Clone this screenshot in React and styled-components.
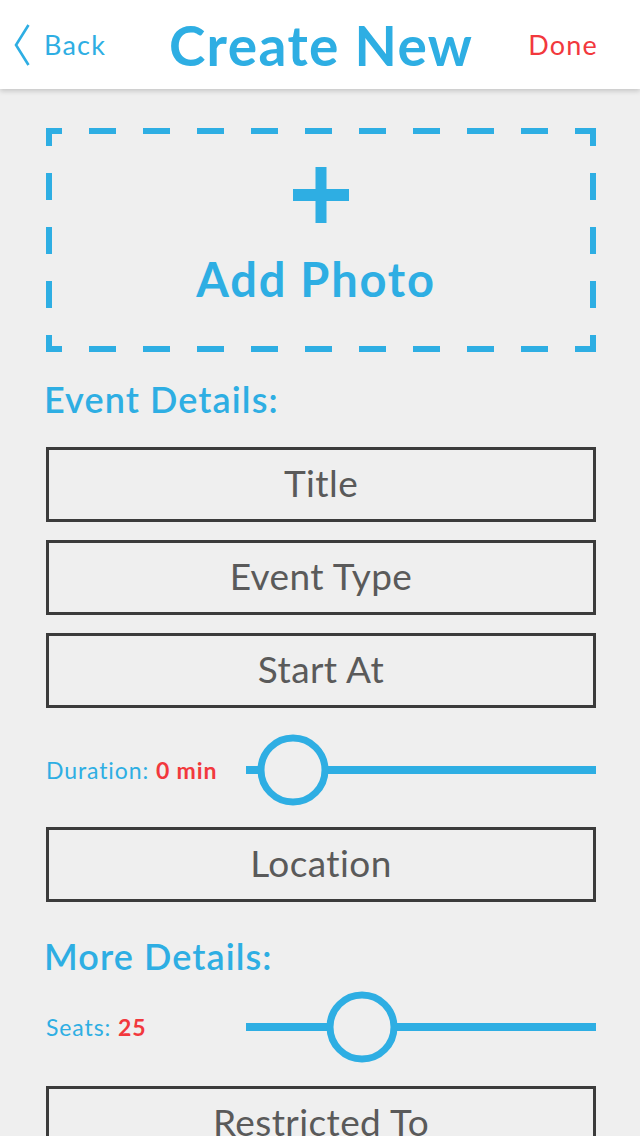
import React from 'react';
import styled, { createGlobalStyle } from 'styled-components';

const colors = {
  blue: '#2eaee3',
  red: '#f2383d',
  bg: '#efefef',
  border: '#3b3b3b',
  text: '#5a5a5a',
};

const GlobalStyle = createGlobalStyle`
  body {
    margin: 0;
    background: ${colors.bg};
    font-family: Lato, 'Open Sans', sans-serif;
  }
`;

const Page = styled.div`
  width: 640px;
  height: 1136px;
  overflow: hidden;
  background: ${colors.bg};
`;

const Header = styled.header`
  position: relative;
  z-index: 1;
  height: 89px;
  background: #fff;
  box-shadow: 0 2px 5px rgba(0, 0, 0, 0.18);
  display: flex;
  align-items: center;
  justify-content: space-between;
  padding: 0 42px 0 14px;
  box-sizing: border-box;
`;

const BackButton = styled.button`
  display: flex;
  align-items: center;
  gap: 14px;
  border: 0;
  background: none;
  padding: 0;
  color: ${colors.blue};
  font: 400 27px Lato, sans-serif;
  letter-spacing: 1.2px;
  cursor: pointer;
`;

const Title = styled.h1`
  margin: 0 0 0 8px;
  color: ${colors.blue};
  font: 700 55px Lato, sans-serif;
  letter-spacing: 1.4px;
`;

const DoneButton = styled.button`
  border: 0;
  background: none;
  padding: 0;
  color: ${colors.red};
  font: 400 27px Lato, sans-serif;
  letter-spacing: 1.2px;
  cursor: pointer;
`;

const Content = styled.main`
  padding: 39px 44px 0 46px;
`;

const dash = (dir) =>
  `linear-gradient(${dir}, ${colors.blue} 27px, transparent 27px)`;

const PhotoBox = styled.div`
  height: 224px;
  display: flex;
  flex-direction: column;
  align-items: center;
  color: ${colors.blue};
  background-image: ${dash('to right')}, ${dash('to right')},
    ${dash('to bottom')}, ${dash('to bottom')};
  background-size: 54px 6px, 54px 6px, 6px 54px, 6px 54px;
  background-repeat: repeat-x, repeat-x, repeat-y, repeat-y;
  background-position: -11px 0, -11px 100%, 0 -9px, 100% -9px;
`;

const Plus = styled.svg`
  margin-top: 39px;
  width: 56px;
  height: 56px;
`;

const PhotoLabel = styled.div`
  margin: 32px 10px 0 0;
  font: 700 47px Lato, sans-serif;
  letter-spacing: 1.8px;
  line-height: 48px;
`;

const SectionTitle = styled.h2`
  margin: ${(p) => p.$top}px 0 0 -2px;
  color: ${colors.blue};
  font: 600 36px Lato, sans-serif;
  letter-spacing: 1.1px;
  line-height: 44px;
`;

const Field = styled.div`
  height: 75px;
  margin-top: ${(p) => p.$top}px;
  padding-bottom: 5px;
  box-sizing: border-box;
  border: 3px solid ${colors.border};
  display: flex;
  align-items: center;
  justify-content: center;
  color: ${colors.text};
  font: 400 37px Lato, sans-serif;
  letter-spacing: 0.4px;
`;

const SliderRow = styled.div`
  display: flex;
  align-items: center;
  height: 71px;
  margin-top: ${(p) => p.$top}px;
`;

const SliderLabel = styled.div`
  width: 200px;
  color: ${colors.blue};
  font: 400 23px Lato, sans-serif;
  letter-spacing: 0.9px;

  b {
    color: ${colors.red};
    font-weight: 700;
  }
`;

const Track = styled.div`
  position: relative;
  flex: 1;
  height: 8px;
  background: ${colors.blue};
`;

const Thumb = styled.div`
  position: absolute;
  top: 50%;
  width: 71px;
  height: 71px;
  box-sizing: border-box;
  border: 7px solid ${colors.blue};
  border-radius: 50%;
  background: ${colors.bg};
  transform: translate(-50%, -50%);
`;

const Slider = ({ label, value, center }) => (
  <>
    <SliderLabel>
      {label} <b>{value}</b>
    </SliderLabel>
    <Track>
      <Thumb style={{ left: center }} />
    </Track>
  </>
);

const App = () => (
  <Page>
    <GlobalStyle />
    <Header>
      <BackButton>
        <svg width="16" height="42" viewBox="0 0 16 42">
          <polyline points="14.5,1 2,21 14.5,41" fill="none" stroke={colors.blue} strokeWidth="2.6" />
        </svg>
        Back
      </BackButton>
      <Title>Create New</Title>
      <DoneButton>Done</DoneButton>
    </Header>
    <Content>
      <PhotoBox>
        <Plus viewBox="0 0 56 56">
          <rect x="22.5" y="0" width="11" height="56" fill={colors.blue} />
          <rect x="0" y="22" width="56" height="12" fill={colors.blue} />
        </Plus>
        <PhotoLabel>Add Photo</PhotoLabel>
      </PhotoBox>

      <SectionTitle $top={25}>Event Details:</SectionTitle>
      <Field $top={26}>Title</Field>
      <Field $top={18}>Event Type</Field>
      <Field $top={18}>Start At</Field>
      <SliderRow $top={26}>
        <Slider label="Duration:" value="0 min" center="47px" />
      </SliderRow>
      <Field $top={22}>Location</Field>

      <SectionTitle $top={32}>More Details:</SectionTitle>
      <SliderRow $top={13}>
        <Slider label="Seats:" value="25" center="116px" />
      </SliderRow>
      <Field $top={24}>Restricted To</Field>
    </Content>
  </Page>
);

export default App;
